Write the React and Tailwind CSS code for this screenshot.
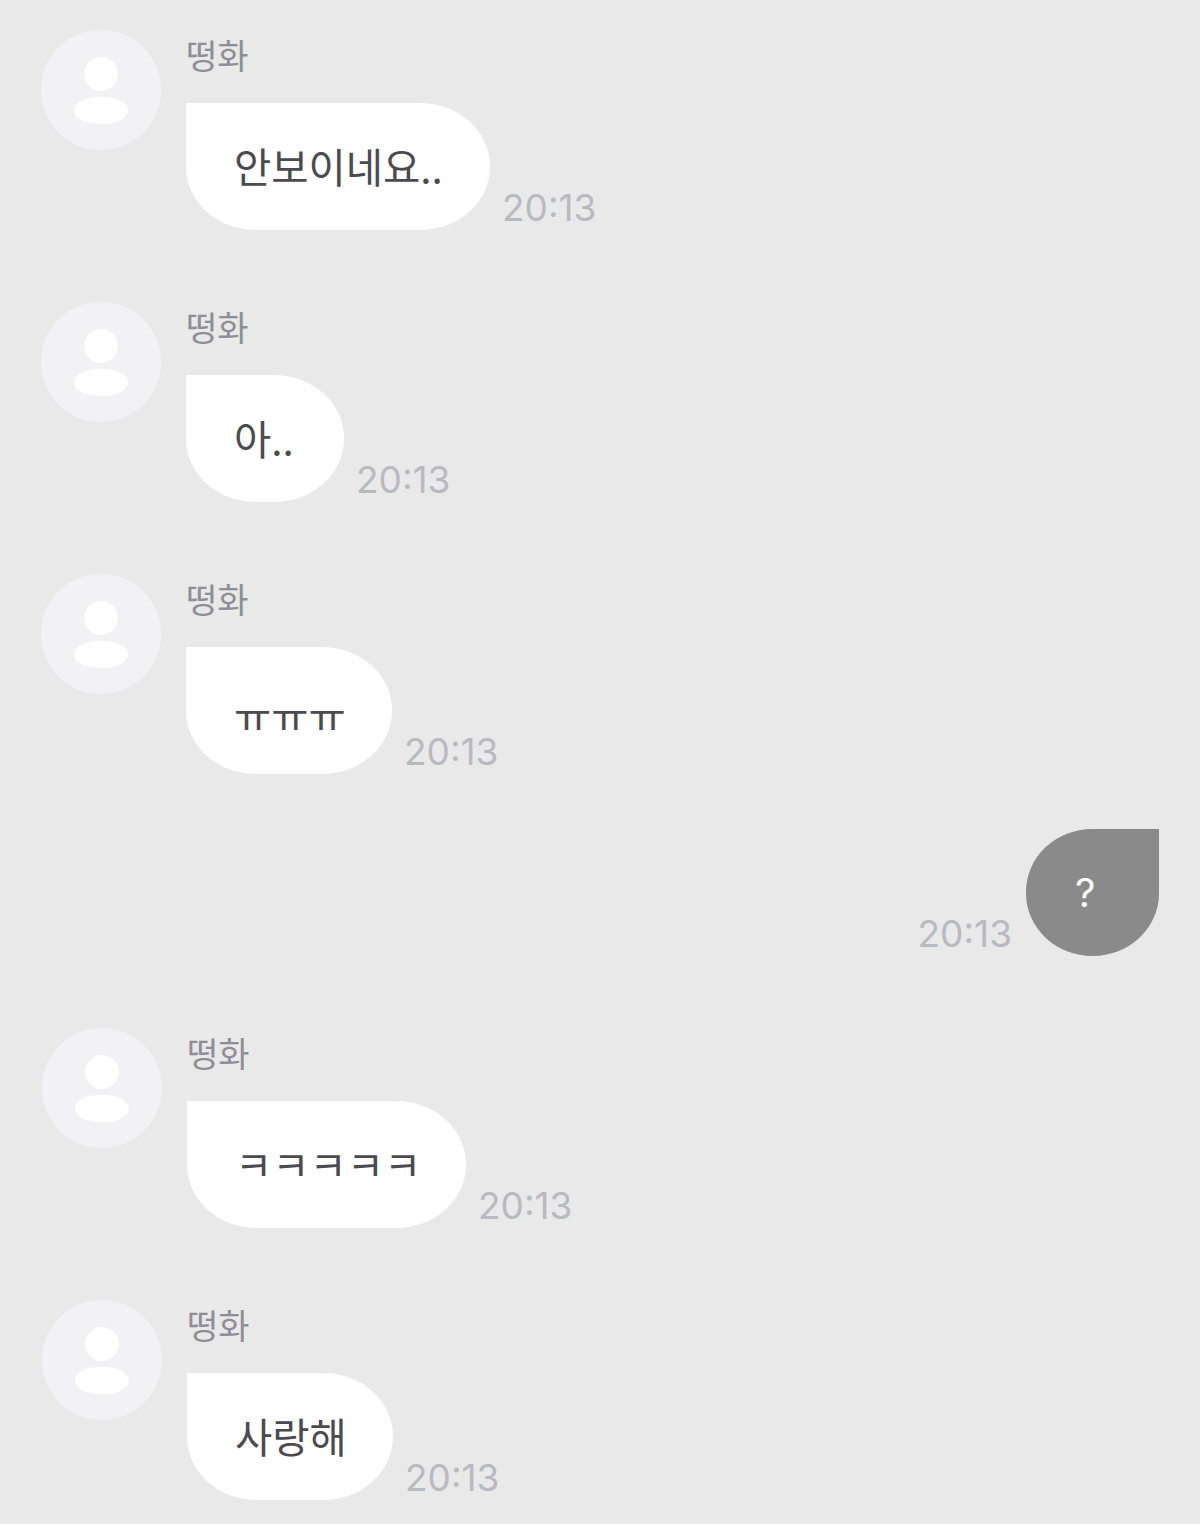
import React from 'react';

const messages = [
  { id: 1, text: '안보이네요..', width: 'w-[304px]', left: 'pl-[41px]', nudge: '' },
  { id: 2, text: '아..', width: 'w-[158px]', left: 'pl-[41px]', nudge: '' },
  { id: 3, text: 'ㅠㅠㅠ', width: 'w-[206px]', left: 'pl-[41px]', nudge: 'pt-[10px]' },
  { id: 4, text: '?', mine: true },
  { id: 5, text: 'ㅋㅋㅋㅋㅋ', width: 'w-[279px]', left: 'pl-[42px]', nudge: '' },
  { id: 6, text: '사랑해', width: 'w-[206px]', left: 'pl-[42px]', nudge: '' },
];

const Time = () => (
  <span className="text-[37px] leading-[44px] text-[#b9b9c1] font-['Inter',sans-serif]">20:13</span>
);

const Avatar = () => (
  <div className="w-[120px] h-[120px] shrink-0 rounded-full bg-[#f2f2f4] flex flex-col items-center pt-[27px]">
    <div className="w-[34px] h-[34px] rounded-full bg-white" />
    <div className="w-[54px] h-[27px] mt-[6px] rounded-[24px/13.5px] bg-white" />
  </div>
);

const Incoming = ({ msg }) => (
  <div className={`flex gap-[25px] ${msg.left}`}>
    <Avatar />
    <div className="flex flex-col">
      <span className="h-[73px] text-[34px] leading-[50px] text-[#8e8e96] font-['Noto_Sans_CJK_KR',sans-serif]">
        떵화
      </span>
      <div className="flex items-end gap-[12px]">
        <div className={`${msg.width} ${msg.nudge} h-[127px] flex items-center pl-[48px] bg-white rounded-tr-[70px_63px] rounded-br-[70px_63px] rounded-bl-[70px_63px] text-[40.5px] leading-none text-[#4a4a4f] whitespace-nowrap font-['Noto_Sans_CJK_KR',sans-serif]`}>
          {msg.text}
        </div>
        <Time />
      </div>
    </div>
  </div>
);

const Outgoing = ({ msg }) => (
  <div className="flex justify-end items-end gap-[14px] pr-[41px] mt-[-17px]">
    <Time />
    <div className="w-[133px] h-[127px] flex items-center pl-[49px] bg-[#8a8a8a] rounded-tl-[68px_64px] rounded-br-[68px_64px] rounded-bl-[68px_64px] text-[40px] leading-none text-white font-['Inter',sans-serif]">
      {msg.text}
    </div>
  </div>
);

export default function App() {
  return (
    <div className="w-[1200px] h-[1524px] overflow-hidden bg-[#e9e9e9] pt-[30px] flex flex-col gap-[72px]">
      {messages.map((msg) =>
        msg.mine ? <Outgoing key={msg.id} msg={msg} /> : <Incoming key={msg.id} msg={msg} />
      )}
    </div>
  );
}
